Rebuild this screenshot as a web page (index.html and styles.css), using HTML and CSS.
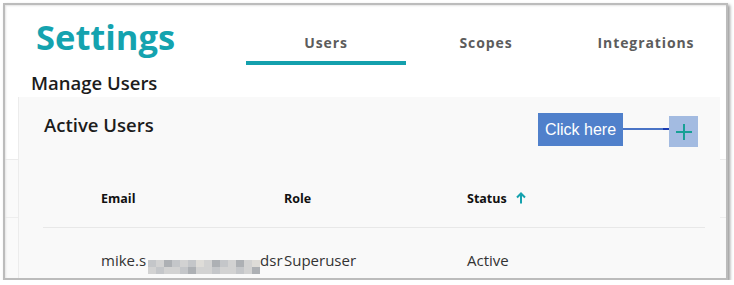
FILE: index.html
```html
<!DOCTYPE html>
<html lang="en">
<head>
    <meta charset="UTF-8">
    <title>Settings</title>
    <link rel="stylesheet" href="styles.css">
</head>
<body>
    <div class="frame">
        <header class="top">
            <h1 class="title">Settings</h1>
            <nav class="tabs">
                <a class="tab active" href="#">Users</a>
                <a class="tab" href="#">Scopes</a>
                <a class="tab" href="#">Integrations</a>
            </nav>
        </header>

        <h2 class="page-title">Manage Users</h2>

        <section class="panel">
            <div class="panel-head">
                <h3>Active Users</h3>
                <div class="actions">
                    <span class="callout">Click here</span>
                    <span class="connector"></span>
                    <button class="add-btn" aria-label="Add user">
                        <svg width="18" height="18" viewBox="0 0 18 18">
                            <path d="M9 1v16M1 9h16" stroke="#16a095" stroke-width="2" fill="none"/>
                        </svg>
                    </button>
                </div>
            </div>

            <div class="table">
                <div class="row head">
                    <span></span>
                    <span>Email</span>
                    <span>Role</span>
                    <span>Status
                        <svg class="sort" width="10" height="12" viewBox="0 0 10 12">
                            <path d="M5 11.5V1.5M1 5.5l4-4 4 4" stroke="#15a2ae" stroke-width="2" fill="none"/>
                        </svg>
                    </span>
                </div>
                <div class="row">
                    <span></span>
                    <span class="email">mike.s<span class="blur">
                        <i class="b2"></i><i class="b1"></i><i class="b3"></i><i class="b2"></i><i class="b1"></i><i class="b2"></i><i class="b4"></i><i class="b1"></i><i class="b3"></i><i class="b2"></i><i class="b1"></i><i class="b3"></i><i class="b1"></i><i class="b4"></i>
                        <i class="b1"></i><i class="b2"></i><i class="b1"></i><i class="b1"></i><i class="b2"></i><i class="b3"></i><i class="b1"></i><i class="b1"></i><i class="b2"></i><i class="b1"></i><i class="b1"></i><i class="b2"></i><i class="b1"></i><i class="b3"></i>
                    </span>dsr</span>
                    <span>Superuser</span>
                    <span>Active</span>
                </div>
            </div>
        </section>
    </div>
</body>
</html>
```

FILE: styles.css
```css
body {
    margin: 0;
    padding: 3px 0 0 3px;
    background: #ffffff;
    font-family: 'Open Sans', sans-serif;
    color: #222222;
}

.frame {
    box-sizing: border-box;
    width: 725px;
    height: 277px;
    overflow: hidden;
    border: 2px solid #bcbcbc;
    box-shadow: inset 1px 1px 2px #e4e4e4, 2px 2px 3px #9c9c9c;
    background: linear-gradient(to bottom, #ffffff 0 154px, #ececec 154px 155px, #fafafa 155px 212px, #eeeeee 212px 213px, #fafafa 213px);
}

/* header with title and tabs */
.top {
    display: flex;
    height: 60px;
}

.title {
    flex: 1;
    margin: 0;
    padding: 8px 0 0 31px;
    font-size: 34.5px;
    font-weight: 700;
    line-height: 47px;
    color: #14a3af;
}

.tabs {
    display: flex;
    align-items: flex-end;
}

.tab {
    width: 160px;
    padding-bottom: 9px;
    border-bottom: 4px solid transparent;
    text-align: center;
    font-size: 14px;
    font-weight: 700;
    line-height: 19px;
    letter-spacing: 0.9px;
    color: #5c5c5c;
    text-decoration: none;
}

.tab.active {
    border-bottom-color: #14a0ad;
}

.page-title {
    margin: 5px 0 1px 26px;
    font-size: 18.5px;
    font-weight: 600;
    line-height: 26px;
    color: #1c1c1c;
}

/* grey card */
.panel {
    margin: 0 6px 0 13px;
    padding: 15px 22px 0 25px;
    height: 200px;
    background: #f9f9f9;
    border-left: 1px solid #ececec;
}

.panel-head {
    display: flex;
    justify-content: space-between;
    align-items: flex-start;
}

.panel-head h3 {
    margin: 0;
    font-size: 18.5px;
    font-weight: 600;
    line-height: 25px;
    color: #1c1c1c;
}

.actions {
    display: flex;
    align-items: flex-start;
}

.callout {
    width: 85px;
    height: 33px;
    margin-top: 1px;
    background: #5080cb;
    color: #ffffff;
    font-family: 'Liberation Sans', Arial, sans-serif;
    font-size: 16px;
    line-height: 33px;
    text-align: center;
}

.connector {
    width: 46px;
    height: 2px;
    margin-top: 16px;
    background: linear-gradient(to right, #4a74c6 0 40px, #1b3cb2 40px);
}

.add-btn {
    display: flex;
    align-items: center;
    justify-content: center;
    width: 29px;
    height: 31px;
    margin-top: 4px;
    padding: 0;
    border: none;
    background: #a3bbe1;
}

/* users table */
.table {
    margin: 0 -7px 0 -1px;
}

.row {
    display: grid;
    grid-template-columns: 58px 183px 183px 1fr;
    padding-top: 22px;
    font-size: 15px;
    line-height: 20px;
    color: #333333;
}

.row.head {
    padding: 43px 0 20px;
    border-bottom: 1px solid #e8e8e8;
    font-size: 12.5px;
    font-weight: 700;
    line-height: 17px;
    color: #111111;
}

.sort {
    margin-left: 6px;
    vertical-align: -1px;
}

.email {
    white-space: nowrap;
}

.blur {
    display: inline-grid;
    grid-template-columns: repeat(14, 8px);
    grid-auto-rows: 7px;
    margin-left: 2px;
    vertical-align: -1px;
}

.blur i { display: block; }
.blur .b1 { background: #d2d2d2; }
.blur .b2 { background: #c4c6c9; }
.blur .b3 { background: #adb0b4; }
.blur .b4 { background: #dedcd8; }
```
